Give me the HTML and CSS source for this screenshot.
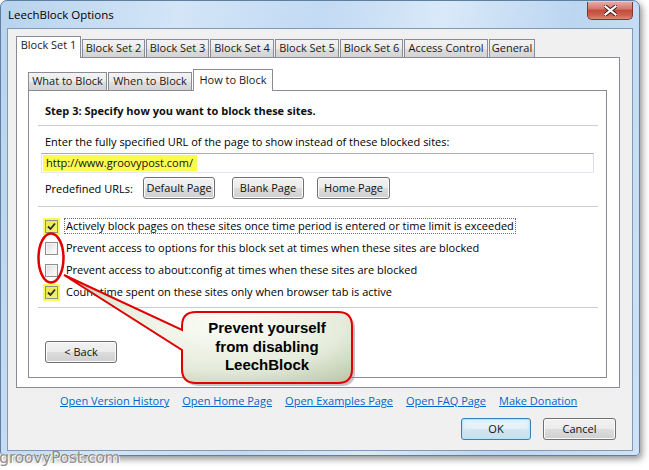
FILE: index.html
```html
<!DOCTYPE html>
<html>
<head>
<meta charset="utf-8">
<title>LeechBlock Options</title>
<link rel="stylesheet" href="styles.css">
</head>
<body>
<div class="window">
  <div class="titlebar">
    <span class="title">LeechBlock Options</span>
    <div class="close">
      <svg width="13" height="11" viewBox="0 0 13 11"><path d="M1.5 1.5 L11.5 9.5 M11.5 1.5 L1.5 9.5" stroke="#3a1a1a" stroke-width="4" stroke-linecap="square"/><path d="M1.5 1.5 L11.5 9.5 M11.5 1.5 L1.5 9.5" stroke="#fff" stroke-width="2.2" stroke-linecap="square"/></svg>
    </div>
  </div>
  <div class="client">
    <div class="tabs outer-tabs">
      <div class="tab sel w-bs1">Block Set 1</div>
      <div class="tab w-bs">Block Set 2</div>
      <div class="tab w-bs">Block Set 3</div>
      <div class="tab w-bs4">Block Set 4</div>
      <div class="tab w-bs4">Block Set 5</div>
      <div class="tab w-bs">Block Set 6</div>
      <div class="tab w-ac">Access Control</div>
      <div class="tab w-gen">General</div>
    </div>
    <div class="outer-panel">
      <div class="tabs inner-tabs">
        <div class="tab w-what">What to Block</div>
        <div class="tab w-when">When to Block</div>
        <div class="tab sel w-how">How to Block</div>
      </div>
      <div class="inner-panel">
        <div class="step">Step 3: Specify how you want to block these sites.</div>
        <div class="sep"></div>
        <div class="label">Enter the fully specified URL of the page to show instead of these blocked sites:</div>
        <div class="textbox"><span class="hl">http://www.groovypost.com/</span></div>
        <div class="predef">
          <span class="predef-label">Predefined URLs:</span>
          <button class="btn b-default">Default Page</button>
          <button class="btn b-blank">Blank Page</button>
          <button class="btn b-home">Home Page</button>
        </div>
        <div class="sep sep2"></div>
        <div class="checks">
          <div class="row">
            <span class="cbwrap hlbox"><span class="cb"><svg width="11" height="11" viewBox="0 0 11 11"><path d="M2 5.5 L4.5 8 L9 2.5" fill="none" stroke="#2b2b2b" stroke-width="1.8"/></svg></span></span>
            <span class="cblabel focus">Actively block pages on these sites once time period is entered or time limit is exceeded</span>
          </div>
          <div class="row">
            <span class="cbwrap"><span class="cb"></span></span>
            <span class="cblabel">Prevent access to options for this block set at times when these sites are blocked</span>
          </div>
          <div class="row">
            <span class="cbwrap"><span class="cb"></span></span>
            <span class="cblabel">Prevent access to about:config at times when these sites are blocked</span>
          </div>
          <div class="row">
            <span class="cbwrap hlbox"><span class="cb"><svg width="11" height="11" viewBox="0 0 11 11"><path d="M2 5.5 L4.5 8 L9 2.5" fill="none" stroke="#2b2b2b" stroke-width="1.8"/></svg></span></span>
            <span class="cblabel">Count time spent on these sites only when browser tab is active</span>
          </div>
        </div>
        <div class="sep sep3"></div>
        <button class="btn back">&lt; Back</button>
      </div>
    </div>
    <div class="links">
      <a class="link">Open Version History</a>
      <a class="link">Open Home Page</a>
      <a class="link">Open Examples Page</a>
      <a class="link">Open FAQ Page</a>
      <a class="link">Make Donation</a>
    </div>
    <div class="actions">
      <button class="btn ok">OK</button>
      <button class="btn cancel">Cancel</button>
    </div>
  </div>
</div>
<div class="watermark">groovyPost.com</div>
<svg class="annot" width="649" height="470" viewBox="0 0 649 470">
  <defs>
    <radialGradient id="cg" cx="0.55" cy="0.45" r="0.7">
      <stop offset="0" stop-color="#fbfdf6"/>
      <stop offset="0.6" stop-color="#e6ecdc"/>
      <stop offset="1" stop-color="#b9c6a8"/>
    </radialGradient>
  </defs>
  <ellipse cx="51" cy="258" rx="12.5" ry="24.5" fill="none" stroke="#e00000" stroke-width="2.5"/>
  <path d="M199 315 H341 Q355 315 355 329 V372 Q355 386 341 386 H199 Q185 386 185 372 V353 L67 278 L185 333 V329 Q185 315 199 315 Z" fill="#7a7a7a" opacity="0.45"/>
  <path d="M196 312 H338 Q352 312 352 326 V369 Q352 383 338 383 H196 Q182 383 182 369 V350 L64 275 L182 330 V326 Q182 312 196 312 Z" fill="url(#cg)" stroke="#e00000" stroke-width="2"/>
</svg>
<div class="callout-text">Prevent yourself<br>from disabling<br>LeechBlock</div>
</body>
</html>
```

FILE: styles.css
```css
* { box-sizing: border-box; }

body {
  margin: 0;
  width: 649px;
  height: 470px;
  overflow: hidden;
  position: relative;
  background: #ffffff;
  font-family: "Open Sans", "Noto Sans", sans-serif;
  font-size: 11px;
  color: #000;
}

.window {
  width: 640px;
  height: 456px;
  border: 1px solid #5f7f9f;
  border-radius: 7px 7px 4px 4px;
  background: linear-gradient(100deg, #b8d3ef 0%, #d3e5f7 25%, #c2daf3 45%, #d9e9f8 62%, #bcd6f1 80%, #cfe2f6 100%);
  box-shadow: 2px 3px 7px rgba(0, 0, 0, 0.45);
  padding: 0 6px 4px 6px;
  display: flex;
  flex-direction: column;
}

.titlebar {
  height: 27px;
  display: flex;
  align-items: flex-start;
  justify-content: space-between;
}

.title {
  font-size: 11.5px;
  padding: 6px 0 0 1px;
  line-height: 16px;
  color: #000;
}

.close {
  width: 46px;
  height: 18px;
  margin: 1px 0 0 0;
  border: 1px solid #7a3a33;
  border-top: none;
  border-radius: 0 0 5px 5px;
  background: linear-gradient(#e4aca1 0%, #d3786a 40%, #c24d3d 50%, #cf6251 80%, #dc8a7a 100%);
  display: flex;
  align-items: center;
  justify-content: center;
}

.client {
  width: 626px;
  height: 423px;
  border: 1px solid #8299b3;
  background: #f0f0f0;
  padding: 7px 0 0 8px;
  display: flex;
  flex-direction: column;
}

.tabs {
  display: flex;
  align-items: flex-end;
  position: relative;
  z-index: 1;
}

.tab {
  height: 18px;
  border: 1px solid #898c95;
  border-bottom: none;
  margin-right: 1px;
  background: linear-gradient(#f3f3f3 0%, #ebebeb 50%, #dedede 51%, #d3d3d3 100%);
  line-height: 16px;
  text-align: center;
  white-space: nowrap;
  color: #1a1a1a;
}

.tab.sel {
  height: 21px;
  background: #ffffff;
  margin-bottom: -1px;
  line-height: 16px;
}

.outer-tabs .tab.sel { height: 22px; }

.w-bs1 { width: 65px; }
.w-bs { width: 63px; }
.w-bs4 { width: 64px; }
.w-ac { width: 84px; }
.w-gen { width: 46px; }
.w-what { width: 79px; }
.w-when { width: 84px; }
.w-how { width: 80px; }

.outer-panel {
  width: 604px;
  height: 331px;
  border: 1px solid #898c95;
  background: #ffffff;
  padding: 11px 12px 9px 11px;
  display: flex;
  flex-direction: column;
}

.inner-tabs .tab { height: 18px; }
.inner-tabs .tab.sel { height: 22px; line-height: 19px; }

.inner-panel {
  flex: 1;
  border: 1px solid #898c95;
  background: #ffffff;
  display: flex;
  flex-direction: column;
  padding: 13px 8px 0 9px;
}

.step {
  font-weight: 700;
  line-height: 14px;
  padding-left: 7px;
  color: #111;
}

.sep {
  height: 2px;
  border-top: 1px solid #cdcdcd;
  border-bottom: 1px solid #ffffff;
  margin-top: 7px;
}

.label {
  margin-top: 8px;
  line-height: 14px;
  padding-left: 7px;
}

.textbox {
  margin: 4px 0 0 3px;
  width: 553px;
  height: 20px;
  border: 1px solid #abadb3;
  border-bottom-color: #e3e9ef;
  border-right-color: #dbdfe6;
  border-left-color: #e2e3ea;
  padding: 1px 1px;
  display: flex;
  align-items: center;
}

.hl {
  background: #fbfb4f;
  padding: 1px 4px 1px 3px;
  line-height: 14px;
  color: #111;
}

.predef {
  margin-top: 4px;
  height: 22px;
  display: flex;
  align-items: center;
  padding-left: 7px;
}

.predef-label { width: 98px; }

.btn {
  font-family: "Open Sans", "Noto Sans", sans-serif;
  font-size: 11px;
  color: #111;
  height: 22px;
  border: 1px solid #707070;
  border-radius: 3px;
  background: linear-gradient(#f2f2f2 0%, #ebebeb 50%, #dddddd 51%, #cfcfcf 100%);
  box-shadow: inset 0 0 0 1px #fbfbfb;
  padding: 0;
  line-height: 18px;
}

.b-default { width: 72px; }
.b-blank { width: 72px; margin-left: 17px; }
.b-home { width: 73px; margin-left: 13px; }

.sep2 { margin-top: 7px; }

.checks {
  margin-top: 7px;
  display: flex;
  flex-direction: column;
}

.row {
  height: 22px;
  display: flex;
  align-items: center;
  padding-left: 5px;
}

.cbwrap {
  width: 17px;
  height: 17px;
  display: flex;
  align-items: center;
  justify-content: center;
  margin-right: 4px;
}

.hlbox { background: #f9f95a; }

.cb {
  width: 13px;
  height: 13px;
  border: 1px solid #8e8f8f;
  background: linear-gradient(135deg, #dcdcdc 0%, #f2f2f2 60%, #ffffff 100%);
  box-shadow: inset 0 0 0 1px #f4f4f4;
  display: flex;
  align-items: center;
  justify-content: center;
}

.hlbox .cb {
  background: linear-gradient(135deg, #e8e84a 0%, #f4f47a 100%);
  box-shadow: none;
}

.cblabel {
  line-height: 14px;
  padding: 0 1px;
  border: 1px dotted transparent;
  white-space: nowrap;
}

.cblabel.focus { border-color: #6e6e6e; }

.sep3 { margin-top: 4px; }

.back {
  width: 72px;
  margin: 32px 0 0 7px;
}

.links {
  margin-top: 5px;
  padding-left: 44px;
  display: flex;
  gap: 13px;
  line-height: 15px;
}

.link {
  color: #0066cc;
  text-decoration: underline;
}

.actions {
  margin-top: 10px;
  display: flex;
  justify-content: flex-end;
  gap: 12px;
  padding-right: 16px;
}

.ok {
  width: 70px;
  border-color: #3c7fb1;
  box-shadow: inset 0 0 0 1px #b8e2f8, inset 0 0 4px 1px #c6e9fb;
  background: linear-gradient(#edf6fb 0%, #e3eff6 50%, #d3e6f1 51%, #c6dde9 100%);
}

.cancel { width: 73px; }

.watermark {
  position: absolute;
  left: -1px;
  top: 449px;
  font-family: "DejaVu Sans", "Liberation Sans", sans-serif;
  font-size: 16px;
  letter-spacing: -0.5px;
  color: #8f8f8f;
  text-shadow: 1px 1px 0 #ffffff, -1px 0 0 #ececec;
  line-height: 18px;
}

.annot {
  position: absolute;
  left: 0;
  top: 0;
  pointer-events: none;
}

.callout-text {
  position: absolute;
  left: 182px;
  top: 319px;
  width: 170px;
  text-align: center;
  font-family: "Liberation Sans", Arial, sans-serif;
  font-weight: 700;
  font-size: 15px;
  line-height: 18.5px;
  color: #000;
}
```
